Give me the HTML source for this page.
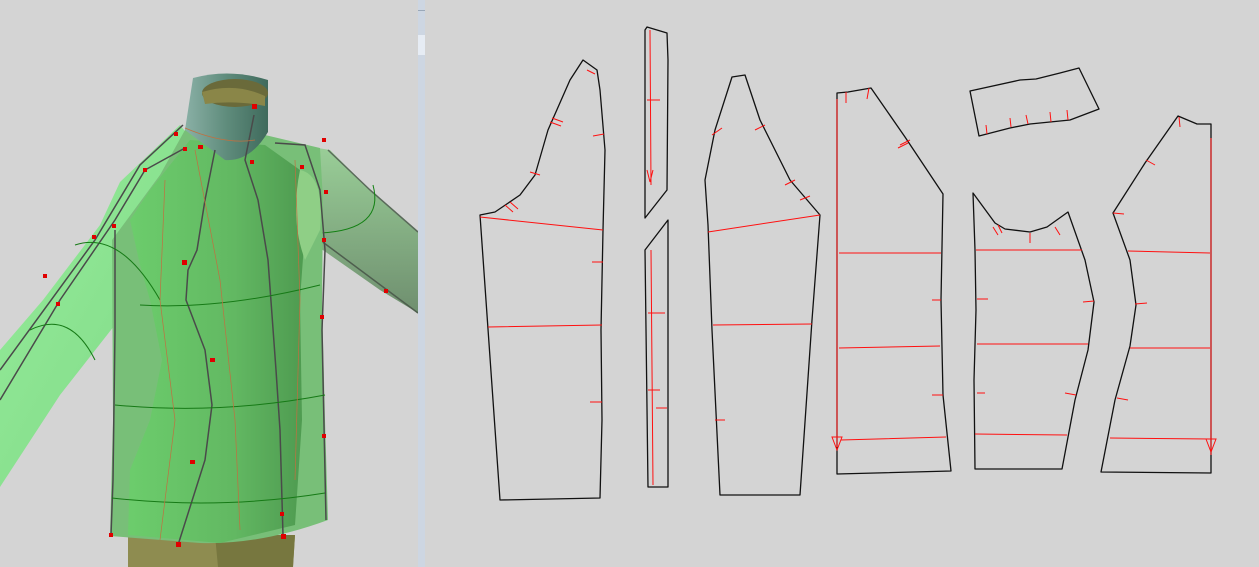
<!DOCTYPE html>
<html><head><meta charset="utf-8"><style>
html,body{margin:0;padding:0;background:#d4d4d4;width:1259px;height:567px;overflow:hidden}
svg{display:block}
</style></head><body>
<svg width="1259" height="567" viewBox="0 0 1259 567" xmlns="http://www.w3.org/2000/svg">
<defs>
<linearGradient id="arm" x1="0" y1="0" x2="1" y2="1"><stop offset="0" stop-color="#96ec9a"/><stop offset="1" stop-color="#7ed886"/></linearGradient>
<linearGradient id="rarm" x1="0" y1="0" x2="0" y2="1"><stop offset="0" stop-color="#9acf98"/><stop offset="1" stop-color="#6f8f6f"/></linearGradient>
<linearGradient id="body" x1="0" y1="0" x2="1" y2="0"><stop offset="0" stop-color="#6ccd6c"/><stop offset="0.6" stop-color="#62b862"/><stop offset="1" stop-color="#4e9a50"/></linearGradient>
<linearGradient id="neck" x1="0" y1="0" x2="1" y2="0"><stop offset="0" stop-color="#8ab0a6"/><stop offset="0.5" stop-color="#5f8c7c"/><stop offset="1" stop-color="#3f6a5c"/></linearGradient>
</defs>
<rect width="1259" height="567" fill="#d4d4d4"/>
<g>
  <!-- legs -->
  <path d="M128 535 L295 535 L293 567 L128 567 Z" fill="#8e8c50"/>
  <path d="M215 535 L295 535 L293 567 L218 567 Z" fill="#77773f"/>
  <!-- right arm -->
  <path d="M300 145 L330 150 L370 190 L418 232 L418 313 L380 290 L320 248 L305 210 Z" fill="url(#rarm)"/>
  <path d="M328 150 L370 190 L418 232" stroke="#5a6a5a" stroke-width="1.5" fill="none"/>
  <path d="M320 240 L418 313" stroke="#4e5e4e" stroke-width="1.5" fill="none"/>
  <path d="M373 185 Q385 230 320 233" stroke="#138013" stroke-width="1" fill="none"/>
  <!-- left arm -->
  <path d="M0 350 L43 300 L100 225 L120 182 L180 125 L200 150 L150 200 L140 293 L60 395 L0 487 Z" fill="url(#arm)"/>
  <!-- outer shell torso -->
  <path d="M112 240 L160 175 L185 130 L265 135 L320 148 L323 200 L322 300 L325 420 L328 520 Q260 545 200 543 L110 536 L113 420 Z" fill="#78bf78"/>
  <!-- inner body -->
  <path d="M190 140 L265 145 L300 170 L305 230 L300 300 L302 420 L295 525 L220 543 L128 535 L130 470 L150 420 L162 360 L150 300 L140 265 L130 220 L150 190 Z" fill="url(#body)"/>
  <path d="M300 170 Q325 175 320 230 L305 260 Q290 220 300 170Z" fill="#8fcf86"/>
  <!-- neck -->
  <path d="M193 78 Q230 68 268 80 L268 132 Q250 162 225 160 L185 130 Z" fill="url(#neck)"/>
  <ellipse cx="235" cy="93" rx="33" ry="14" fill="#6a6a3a"/>
  <path d="M202 92 Q235 82 265 96 L265 106 Q235 100 205 104 Z" fill="#8a8648"/>
  <!-- seams -->
  <g fill="none" stroke="#4a4a4a" stroke-width="1.5">
    <path d="M254 115 L245 160 L258 200 L268 260 L276 370 L280 430 L283 535"/>
    <path d="M215 150 L205 200 L197 250 L188 270 L186 300 L205 350 L212 405 L205 460 L178 545"/>
    <path d="M275 143 L305 145 L320 190 L325 250 L322 330 L326 520"/>
    <path d="M183 125 L140 165 L95 240 L0 370"/>
    <path d="M185 148 L145 170 L115 220 L60 300 L0 400"/>
    <path d="M115 230 L115 330 L113 480 L111 535"/>
  </g>
  <g fill="none" stroke="#167a16" stroke-width="1">
    <path d="M115 405 Q220 415 325 395"/>
    <path d="M112 498 Q220 510 325 493"/>
    <path d="M140 305 Q220 310 320 285"/>
    <path d="M75 245 Q120 230 160 300"/>
    <path d="M30 330 Q70 310 95 360"/>
  </g>
  <g fill="none" stroke="#c07040" stroke-width="0.7">
    <path d="M195 150 L220 280 L235 420 L240 530"/>
    <path d="M295 160 L300 300 L295 480"/>
    <path d="M165 180 L160 300 L175 420 L160 540"/>
    <path d="M185 128 Q225 145 255 140"/>
  </g>
  <g fill="#e00000">
    <rect x="252" y="104" width="5" height="5"/><rect x="183" y="147" width="4" height="4"/>
    <rect x="174" y="132" width="4" height="4"/><rect x="143" y="168" width="4" height="4"/>
    <rect x="112" y="224" width="4" height="4"/><rect x="92" y="235" width="4" height="4"/>
    <rect x="56" y="302" width="4" height="4"/><rect x="43" y="274" width="4" height="4"/>
    <rect x="210" y="358" width="5" height="4"/><rect x="190" y="460" width="5" height="4"/>
    <rect x="176" y="542" width="5" height="5"/><rect x="281" y="534" width="5" height="5"/>
    <rect x="109" y="533" width="4" height="4"/><rect x="322" y="238" width="4" height="4"/>
    <rect x="320" y="315" width="4" height="4"/><rect x="322" y="434" width="4" height="4"/>
    <rect x="384" y="289" width="4" height="4"/><rect x="322" y="138" width="4" height="4"/>
    <rect x="198" y="145" width="5" height="4"/><rect x="182" y="260" width="5" height="5"/>
    <rect x="250" y="160" width="4" height="4"/><rect x="300" y="165" width="4" height="4"/>
    <rect x="324" y="190" width="4" height="4"/><rect x="280" y="512" width="4" height="4"/>
  </g>
</g>
<!-- divider -->
<rect x="418" y="0" width="7" height="567" fill="#cdd6e2"/>
<rect x="418" y="10" width="7" height="1" fill="#9aa8b8"/>
<rect x="418" y="35" width="7" height="20" fill="#e6ecf4"/>
<!-- patterns -->
<g fill="none" stroke="#111" stroke-width="1.3" stroke-linejoin="round">
  <path d="M583 60 L597 70 L600 90 L605 150 L603 230 L601 330 L602 420 L600 498 L500 500 L480 215 L495 212 L520 195 L535 175 L548 130 L570 80 Z"/>
  <path d="M647 27 L667 33 L668 60 L667 190 L645 218 L645 30 Z"/>
  <path d="M668 220 L668 487 L648 487 L645 250 Z"/>
  <path d="M732 77 L745 75 L760 120 L790 180 L820 215 L812 320 L800 495 L720 495 L712 330 L708 225 L705 180 L715 130 Z"/>
  <path d="M837 93 L848 92 L871 88 L905 137 L943 194 L941 300 L943 395 L951 471 L837 474 Z"/>
  <path d="M970 91 L1020 80 L1036 79 L1060 73 L1079 68 L1099 109 L1070 120 L1030 124 L1010 128 L979 136 Z"/>
  <path d="M973 193 L995 223 L1005 229 L1030 232 L1047 227 L1068 212 L1085 260 L1094 302 L1088 350 L1075 400 L1062 469 L975 469 L974 380 L976 310 L975 250 Z"/>
  <path d="M1178 116 L1197 124 L1211 124 L1211 473 L1101 472 L1115 400 L1130 346 L1136 305 L1130 260 L1113 213 L1145 163 Z"/>
</g>
<g fill="none" stroke="#ff1010" stroke-width="1">
  <path d="M480 217 L603 230 M488 327 L602 325 M592 262 L603 262 M590 402 L602 402 M552 118 L563 122 M550 122 L561 126 M593 136 L604 134 M530 172 L540 175 M505 205 L513 212 M510 202 L518 209 M587 70 L595 74"/>
  <path d="M650 30 L651 185 M651 250 L653 485 M647 170 L650 182 L653 170 M647 100 L660 100 M648 313 L665 313 M648 390 L660 390 M656 408 L667 408"/>
  <path d="M708 232 L820 215 M713 325 L812 324 M712 135 L722 128 M755 130 L765 125 M785 185 L795 180 M800 200 L810 196 M715 420 L725 420"/>
  <path d="M839 253 L941 253 M839 348 L940 346 M841 440 L946 437 M837 99 L837 447 M832 437 L842 437 L837 450 Z M846 92 L846 103 M869 88 L867 99 M900 145 L910 140 M898 148 L908 143 M932 300 L941 300 M932 395 L943 395"/>
  <path d="M986 125 L987 134 M1010 118 L1011 127 M1026 115 L1028 124 M1050 112 L1051 122 M1067 110 L1068 120"/>
  <path d="M976 250 L1082 250 M977 344 L1088 344 M975 434 L1067 435 M977 299 L988 299 M977 393 L985 393 M1083 302 L1094 301 M1065 393 L1076 395 M1030 233 L1030 243 M1055 227 L1060 235 M993 227 L998 235 M998 225 L1002 233"/>
  <path d="M1128 251 L1210 253 M1130 348 L1210 348 M1110 438 L1210 439 M1211 138 L1211 455 M1206 439 L1216 439 L1211 452 Z M1135 304 L1147 303 M1117 398 L1128 400 M1146 160 L1155 165 M1113 213 L1124 214 M1179 117 L1180 127"/>
</g>
</svg>
</body></html>
